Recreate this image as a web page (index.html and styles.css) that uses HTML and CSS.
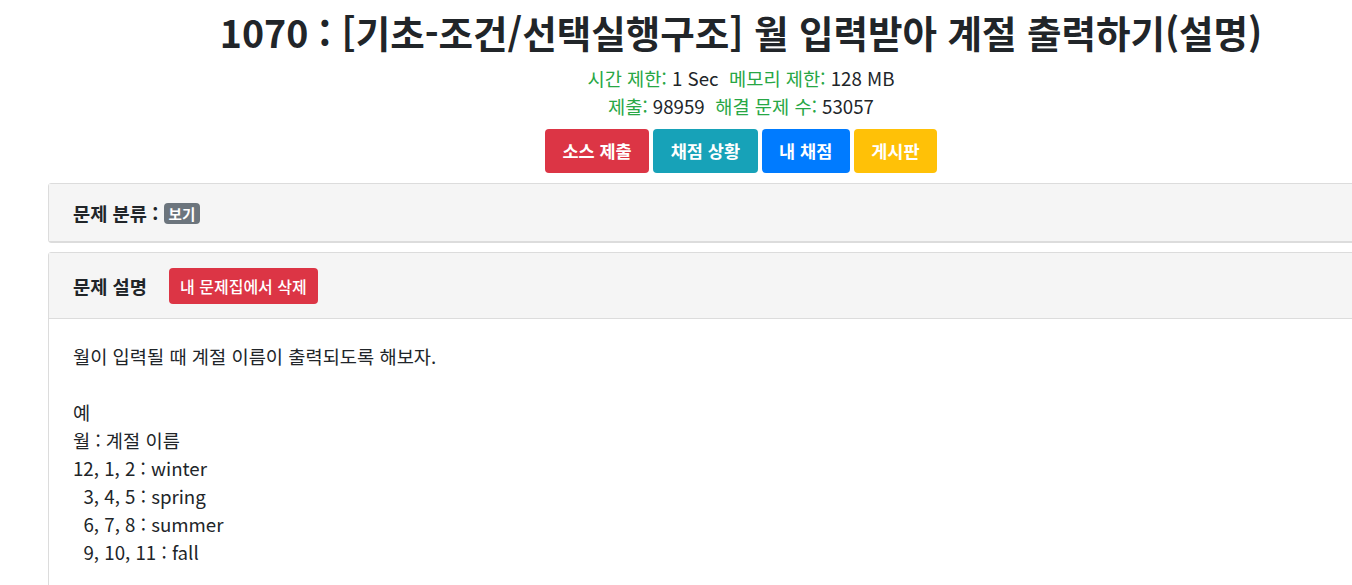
FILE: index.html
```html
<!DOCTYPE html>
<html lang="ko">
<head>
<meta charset="utf-8">
<title>1070</title>
<link rel="stylesheet" href="styles.css">
</head>
<body>
<div class="page">
  <h1 class="title">1070 : [기초-조건/선택실행구조] 월 입력받아 계절 출력하기(설명)</h1>
  <div class="meta">
    <div><span class="lbl">시간 제한:</span> 1 Sec &nbsp;<span class="lbl">메모리 제한:</span> 128 MB</div>
    <div><span class="lbl">제출:</span> 98959 &nbsp;<span class="lbl">해결 문제 수:</span> 53057</div>
  </div>
  <div class="actions">
    <a class="btn btn-red">소스 제출</a>
    <a class="btn btn-teal">채점 상황</a>
    <a class="btn btn-blue">내 채점</a>
    <a class="btn btn-yellow">게시판</a>
  </div>
  <div class="card card-first">
    <div class="card-header">문제 분류 : <span class="badge">보기</span></div>
  </div>
  <div class="card">
    <div class="card-header header-desc">문제 설명 <a class="btn-small">내 문제집에서 삭제</a></div>
    <div class="card-body">
      <p>월이 입력될 때 계절 이름이 출력되도록 해보자.</p>
      <p class="blank">&nbsp;</p>
      <p>예</p>
      <p>월 : 계절 이름</p>
      <p>12, 1, 2 : winter</p>
      <p>&nbsp; 3, 4, 5 : spring</p>
      <p>&nbsp; 6, 7, 8 : summer</p>
      <p>&nbsp; 9, 10, 11 : fall</p>
    </div>
  </div>
</div>
</body>
</html>
```

FILE: styles.css
```css
html, body {
  margin: 0;
  padding: 0;
  overflow: hidden;
  background: #fff;
}
body {
  font-family: "Noto Sans CJK KR", "Noto Sans", sans-serif;
  color: #212529;
}
.page {
  width: 1386px;
  margin-left: 48px;
}
.title {
  text-align: center;
  font-size: 37.5px;
  font-weight: 700;
  line-height: 46px;
  margin: 9px 0 0 0;
}
.meta {
  text-align: center;
  font-size: 18.7px;
  line-height: 28px;
  margin-top: 9px;
}
.lbl {
  color: #28a745;
}
.actions {
  display: flex;
  justify-content: center;
  gap: 4px;
  margin-top: 9px;
}
.btn {
  display: inline-block;
  color: #fff;
  font-size: 17.5px;
  font-weight: 700;
  line-height: 24px;
  padding: 10px 17.5px 10px;
  height: 24px;
  box-sizing: content-box;
  border-radius: 4px;
}
.btn-red { background: #dc3545; }
.btn-teal { background: #17a2b8; }
.btn-blue { background: #007bff; }
.btn-yellow { background: #ffc107; }
.card {
  border: 1px solid #dcdcdc;
  border-radius: 3px;
  margin-top: 9px;
}
.card-first {
  margin-top: 10px;
}
.card-header {
  background: #f5f5f5;
  border-bottom: 1px solid #dcdcdc;
  padding: 16px 24px 15px;
  font-size: 18.7px;
  font-weight: 700;
  line-height: 26px;
}
.badge {
  display: inline-block;
  background: #6c757d;
  color: #fff;
  font-size: 14.5px;
  line-height: 15px;
  padding: 3px 5px;
  border-radius: 4px;
  vertical-align: 1px;
}
.header-desc {
  display: flex;
  align-items: center;
  gap: 22px;
  padding: 15px 24px 14px;
}
.btn-small {
  display: inline-block;
  background: #dc3545;
  color: #fff;
  font-size: 16px;
  font-weight: 500;
  line-height: 22px;
  padding: 7px 11px;
  border-radius: 4px;
}
.card-body {
  padding: 23px 24px 10px;
  font-size: 18.7px;
  line-height: 28px;
  min-height: 320px;
}
.card-body p {
  margin: 0;
}
```
